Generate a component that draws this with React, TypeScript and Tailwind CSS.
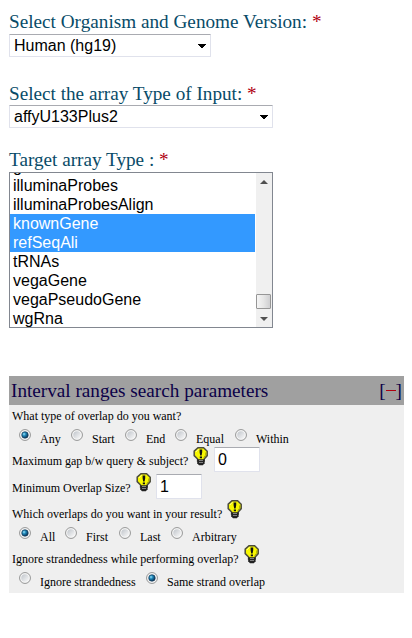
import React from "react";

const serif = "font-['Liberation_Serif','Times_New_Roman',serif]";
const sans = "font-['Liberation_Sans',Arial,sans-serif]";

function Label({ text, width }: { text: string; width: string }) {
  return (
    <div className={`${serif} flex h-[22px] text-[19.2px] leading-[22px] whitespace-pre text-[#084b68]`}>
      <span className={width}>{text}</span>
      <span className="text-[#b00010]">*</span>
    </div>
  );
}

function Select({ value, width }: { value: string; width: string }) {
  return (
    <div className={`${sans} ${width} flex h-[23px] items-center justify-between rounded-[1px] border border-[#e0e2ec] border-t-[#a9abb1] bg-white pr-[4px] pl-[4px] text-[16px] leading-[21px] text-black`}>
      <span>{value}</span>
      <svg width="8" height="4" viewBox="0 0 8 4" shapeRendering="crispEdges">
        <path d="M0 0h8v1H7v1H6v1H5v1H3V3H2V2H1V1H0z" fill="#000" />
      </svg>
    </div>
  );
}

const options = [
  { name: "illuminaProbes", on: false },
  { name: "illuminaProbesAlign", on: false },
  { name: "knownGene", on: true },
  { name: "refSeqAli", on: true },
  { name: "tRNAs", on: false },
  { name: "vegaGene", on: false },
  { name: "vegaPseudoGene", on: false },
  { name: "wgRna", on: false },
];

function ListBox() {
  return (
    <div className={`${sans} flex h-[156px] w-[264px] overflow-hidden border border-[#828790] bg-white text-[16px] leading-[19px]`}>
      <div className="flex w-[245px] flex-col">
        <div className="flex h-[3px] shrink-0 items-end overflow-hidden pl-[3px] text-black">
          <span className="h-[19px] shrink-0">g</span>
        </div>
        {options.map((o) => (
          <div
            key={o.name}
            className={`h-[19px] shrink-0 overflow-hidden pl-[3px] ${o.on ? "bg-[#3399ff] text-white" : "text-black"}`}
          >
            {o.name}
          </div>
        ))}
      </div>
      <div className="flex w-[17px] flex-col items-center border-l border-white bg-[#f0f0f0]">
        <svg width="8" height="4" viewBox="0 0 8 4" className="mt-[7px] shrink-0">
          <path d="M4 0L8 4H0z" fill="#505050" />
        </svg>
        <div className="mt-[110px] h-[15px] w-[15px] shrink-0 self-start rounded-[1px] border border-[#969696] bg-linear-to-r from-[#f5f5f5] via-[#e6e6e6] to-[#cfcfd1]" />
        <svg width="8" height="4" viewBox="0 0 8 4" className="mt-[8px] shrink-0">
          <path d="M0 0h8L4 4z" fill="#505050" />
        </svg>
      </div>
    </div>
  );
}

function Bulb() {
  return (
    <svg width="16" height="19" viewBox="0 0 16 19" className="shrink-0">
      <path d="M5 .8h5.6l3.6 3.4v4.4L11.2 12v2H4.6v-2L1.2 8.6V4.2z" fill="#f8f800" stroke="#4c4c3c" strokeWidth="1.5" />
      <path d="M2.8 5L5.5 2.2" stroke="#ffffa0" strokeWidth="1" fill="none" />
      <path d="M12.6 5.5v2.7L10.6 10.6" stroke="#b4b400" strokeWidth="1" fill="none" />
      <path d="M6.6 2.6h2.6v2.6L8.6 8.4H7.2L6.6 5.2zM6.8 9.4h2.2v1.8H6.8z" fill="#111" />
      <path d="M4.2 12.3h7.4v4L9.8 18.3H6l-1.8-2z" fill="#222" />
      <path d="M6 13.5h4M6 15.5h4" stroke="#999" strokeWidth=".8" />
    </svg>
  );
}

function Radio({ on }: { on?: boolean }) {
  return (
    <svg width="12" height="12" viewBox="0 0 13 13" className="shrink-0">
      <defs>
        <linearGradient id="radio-face" x1="0" y1="0" x2="1" y2="1">
          <stop offset="0" stopColor="#bfc4ca" />
          <stop offset="1" stopColor="#fafafa" />
        </linearGradient>
        <radialGradient id="radio-dot" cx=".35" cy=".35" r=".7">
          <stop offset="0" stopColor="#9be4fb" />
          <stop offset=".4" stopColor="#1c86b8" />
          <stop offset="1" stopColor="#0a2a4c" />
        </radialGradient>
      </defs>
      <circle cx="6.5" cy="6.5" r="5.9" fill="#f6f6f6" stroke="#8e8f8f" strokeWidth="1" />
      <circle cx="6.5" cy="6.5" r="4.1" fill="url(#radio-face)" />
      {on && <circle cx="6.5" cy="6.5" r="3.5" fill="url(#radio-dot)" stroke="#173c5c" strokeWidth=".7" />}
    </svg>
  );
}

function Choice({ text, width, on }: { text: string; width: string; on?: boolean }) {
  return (
    <div className={`${width} flex shrink-0`}>
      <Radio on={on} />
      <span className="mt-[2px] ml-[9px] whitespace-nowrap">{text}</span>
    </div>
  );
}

function NumberBox({ value }: { value: string }) {
  return (
    <div className={`${sans} h-[25px] w-[46px] shrink-0 rounded-[1px] border border-[#e0e2ec] border-t-[#a9abb1] bg-white pl-[3px] text-[16px] leading-[24px]`}>
      {value}
    </div>
  );
}

export default function App() {
  return (
    <div className="h-[638px] w-[412px] overflow-hidden bg-white pl-[9px]">
      <div className="flex flex-col pt-[11px]">
        <Label text="Select Organism and Genome Version:" width="w-[303px] tracking-[0.01px]" />
        <div className="mt-px">
          <Select value="Human (hg19)" width="w-[202px]" />
        </div>
      </div>
      <div className="mt-[26px] flex flex-col">
        <Label text="Select the array Type of Input:" width="w-[238px]" />
        <Select value="affyU133Plus2" width="w-[264px]" />
      </div>
      <div className="mt-[21px] flex flex-col">
        <Label text="Target array Type :" width="w-[150px]" />
        <div className="mt-px">
          <ListBox />
        </div>
      </div>

      <section className={`${serif} mt-[48px] w-[395px] bg-[#efefef] text-[12px] leading-[16px] text-black`}>
        <header className="flex h-[29px] items-center justify-between bg-[#a0a0a0] pr-[2px] pl-[2px] text-[19.2px] leading-[29px] text-[#0c0048]">
          <span className="whitespace-nowrap">Interval ranges search parameters</span>
          <span className="flex items-center">
            [<span className="h-px w-[10px] bg-[#b00010]" />]
          </span>
        </header>
        <div className="h-[188px]">
          <div className="flex h-[24px] pt-[3px] pl-[3px]">What type of overlap do you want?</div>
          <div className="flex h-[18px] pl-[10px]">
            <Choice text="Any" width="w-[52px]" on />
            <Choice text="Start" width="w-[54px]" />
            <Choice text="End" width="w-[50px]" />
            <Choice text="Equal" width="w-[60px]" />
            <Choice text="Within" width="w-[60px]" />
          </div>
          <div className="flex h-[27px] pl-[3px]">
            <span className="mt-[6px] w-[181px] shrink-0 whitespace-nowrap">Maximum gap b/w query &amp; subject?</span>
            <Bulb />
            <span className="ml-[5px]">
              <NumberBox value="0" />
            </span>
          </div>
          <div className="flex h-[26px] pl-[3px]">
            <span className="mt-[6px] w-[124px] shrink-0 whitespace-nowrap">Minimum Overlap Size?</span>
            <div className="-mt-px">
              <Bulb />
            </div>
            <span className="ml-[4px]">
              <NumberBox value="1" />
            </span>
          </div>
          <div className="flex h-[27px] pl-[3px]">
            <span className="mt-[6px] w-[215px] shrink-0 whitespace-nowrap">Which overlaps do you want in your result?</span>
            <Bulb />
          </div>
          <div className="flex h-[18px] pl-[10px]">
            <Choice text="All" width="w-[46px]" on />
            <Choice text="First" width="w-[54px]" />
            <Choice text="Last" width="w-[52px]" />
            <Choice text="Arbitrary" width="w-[80px]" />
          </div>
          <div className="flex h-[27px] pl-[3px]">
            <span className="mt-[6px] w-[232px] shrink-0 whitespace-nowrap">Ignore strandedness while performing overlap?</span>
            <Bulb />
          </div>
          <div className="flex h-[20px] pl-[10px]">
            <Choice text="Ignore strandedness" width="w-[127px]" />
            <Choice text="Same strand overlap" width="w-[130px]" on />
          </div>
        </div>
      </section>
    </div>
  );
}
